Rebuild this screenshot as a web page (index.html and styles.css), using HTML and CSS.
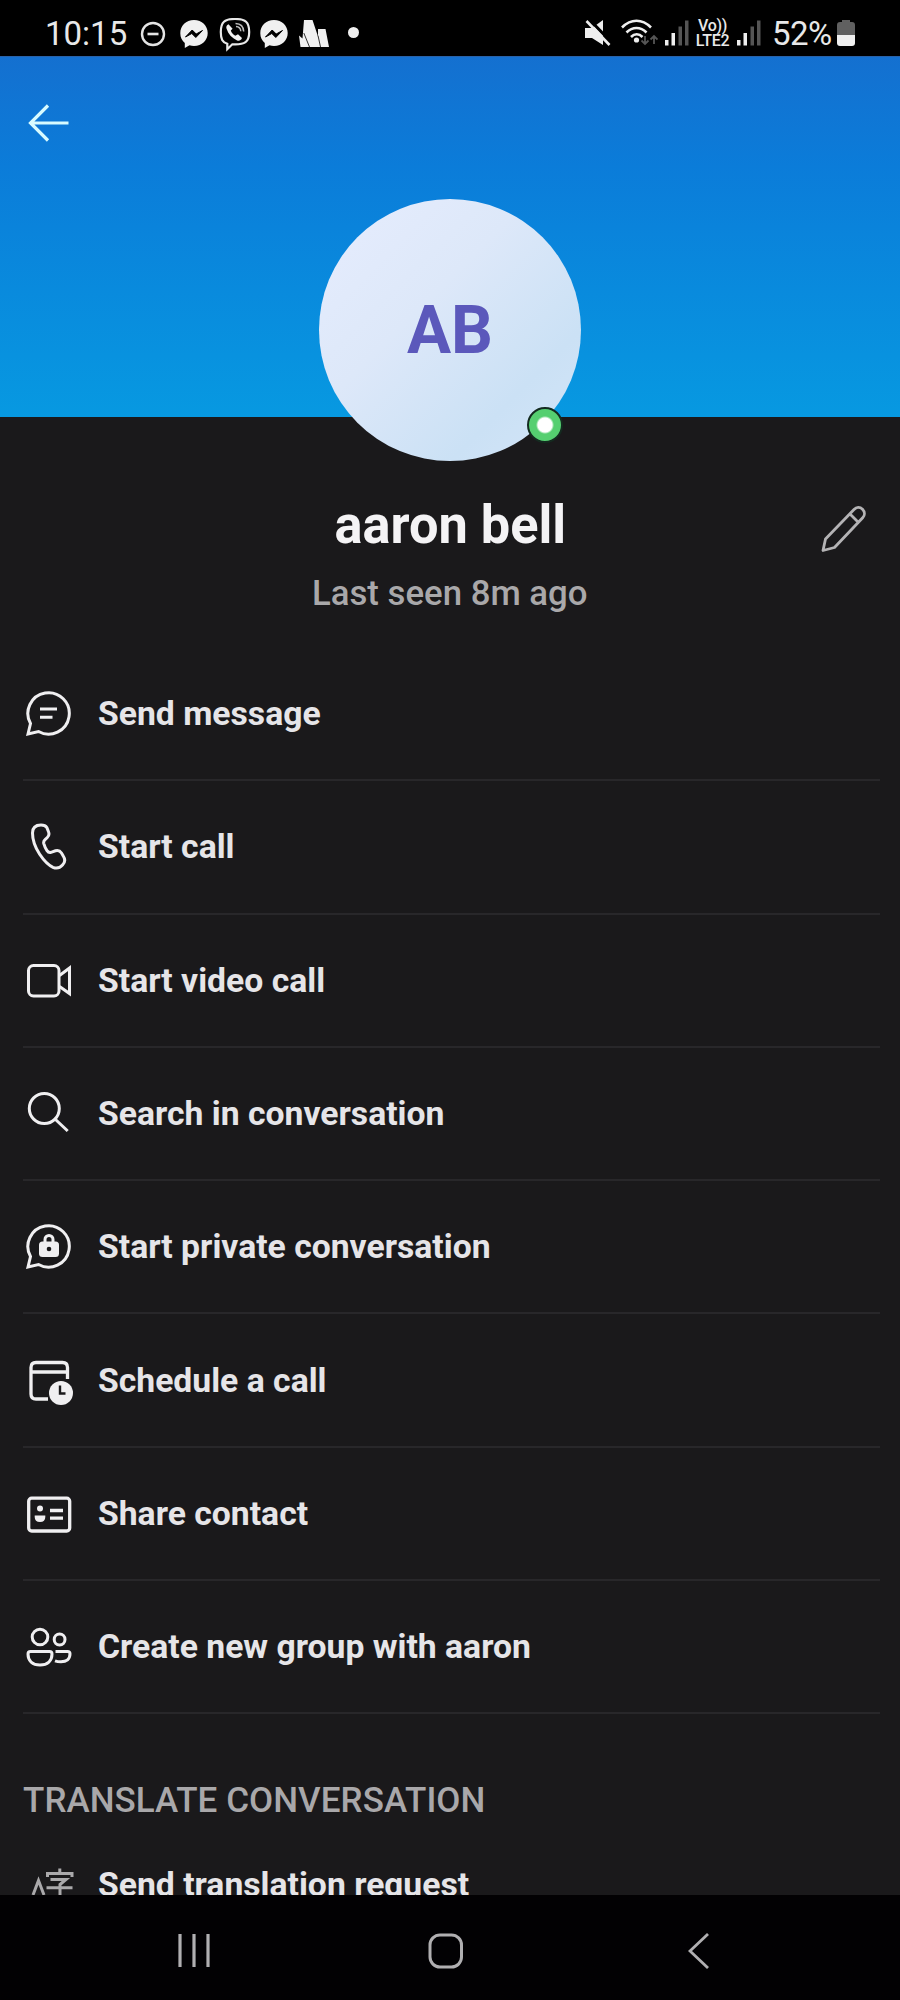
FILE: index.html
```html
<!DOCTYPE html>
<html lang="en">
<head>
<meta charset="utf-8">
<title>aaron bell</title>
<link rel="stylesheet" href="styles.css">
</head>
<body>
<div class="phone">
  <header class="status">
    <div class="status-left">
      <span class="clock">10:15</span>
      <svg class="dnd" width="26" height="32" viewBox="0 0 26 32"><circle cx="13" cy="16" r="11" fill="none" stroke="#e4e4e4" stroke-width="2.4"/><path d="M7.500 16h11" stroke="#e4e4e4" stroke-width="2.600"/></svg>
      <svg class="messenger" width="28" height="32" viewBox="0 0 28 32"><path d="M14 2C6 2 .3 7.800.3 15.200c0 4.100 1.700 7.400 4.500 9.700v5l4.700-2.600c1.400.4 2.900.6 4.500.6 8 0 13.700-5.600 13.700-12.900S22 2 14 2z" fill="#f0f0f0"/><path d="M5.500 19l6.700-7 4 4 6.300-3.500-6.700 7-4-4z" fill="#000" stroke="#000" stroke-width="1" stroke-linejoin="round"/></svg>
      <svg class="viber" width="32" height="34" viewBox="0 0 32 34"><path d="M16 1C5.500 1 1.800 4 1.800 14c0 7 1.500 10.300 6.500 11.800v5.400l5-4.900C26 27 30.200 24 30.200 14 30.200 4 26.500 1 16 1z" fill="none" stroke="#e8e8e8" stroke-width="2.200"/><path d="M9.500 6.300c-1.800.8-2.600 2.400-2 4.300 1.800 5.700 5.300 9.500 10.600 11.900 2 .9 4-.2 4.900-2.500l-4-3.700-2.700 1.500c-2.200-1.200-3.700-2.800-4.500-5.200l1.800-1.900z" fill="#f0f0f0"/><path d="M16.500 5.500c5 .2 8 3 8.200 8M17 8.500c3 .2 4.600 1.900 4.800 4.700" fill="none" stroke="#bbb" stroke-width="1.500"/></svg>
      <svg class="messenger second" width="28" height="32" viewBox="0 0 28 32"><path d="M14 2C6 2 .3 7.800.3 15.200c0 4.100 1.700 7.400 4.500 9.700v5l4.700-2.600c1.400.4 2.900.6 4.500.6 8 0 13.700-5.600 13.700-12.900S22 2 14 2z" fill="#f0f0f0"/><path d="M5.500 19l6.700-7 4 4 6.300-3.500-6.700 7-4-4z" fill="#000" stroke="#000" stroke-width="1" stroke-linejoin="round"/></svg>
      <svg class="peaks" width="31" height="32" viewBox="0 0 31 32"><path d="M0 17.500L3.500 20.500 5 2h8.500L19 18.500V11h7.500L30 29H1.500z" fill="#f0f0f0"/><path d="M4.800 15L10.500 29M19 17.500L21.500 29" stroke="#000" stroke-width=".8"/></svg>
      <span class="more-dot"></span>
    </div>
    <div class="status-right">
      <svg class="mute" width="26" height="30" viewBox="0 0 26 30"><path d="M0 10h7l11-8v25L7 20H0z" fill="#eee"/><path d="M3 0l23 24" stroke="#000" stroke-width="3"/><path d="M1.500 3l23 24" stroke="#eee" stroke-width="2.600"/></svg>
      <svg class="wifi" width="37" height="30" viewBox="0 0 37 30"><g fill="none" stroke="#eee" stroke-width="2.600"><path d="M1 9.500C10 .5 21 .5 30 9.500"/><path d="M5.500 14.500c6-6 14-6 20 0"/><path d="M10 19c3.500-3.500 8-3.500 11.500 0"/></g><circle cx="15.500" cy="22" r="2.600" fill="#eee"/><path d="M24 18v8m-3.500-3.500L24 26l3.500-3.500M33 26v-8m-3.500 3.500L33 18l3.500 3.500" fill="none" stroke="#555" stroke-width="1.800"/></svg>
      <svg class="signal" width="24" height="30" viewBox="0 0 24 30"><path d="M0 22h3.500v5.500H0zM6.500 15H10v12.500H6.500z" fill="#eee"/><path d="M13.500 8.500H17v19h-3.500zM20 2.500h3.500v25H20z" fill="#555"/></svg>
      <span class="lte"><b>Vo))</b><b>LTE2</b></span>
      <svg class="signal" width="24" height="30" viewBox="0 0 24 30"><path d="M0 22h3.500v5.500H0zM6.500 15H10v12.500H6.500z" fill="#eee"/><path d="M13.500 8.500H17v19h-3.500zM20 2.500h3.500v25H20z" fill="#555"/></svg>
      <span class="percent">52%</span>
      <svg class="battery" width="18" height="30" viewBox="0 0 18 30"><path d="M0 17V7q0-3 3-3h2V2h8v2h2q3 0 3 3v10z" fill="#606060"/><path d="M0 17h18v8q0 3-3 3H3q-3 0-3-3z" fill="#f0f0f0"/></svg>
    </div>
  </header>

  <section class="cover">
    <svg class="back" width="44" height="40" viewBox="0 0 44 40"><path d="M40.500 20H2.500M20 2.500L2.500 20 20 37.500" fill="none" stroke="#d8fbff" stroke-width="3.200"/></svg>
    <div class="avatar"><span class="fit initials">AB</span><i class="presence"></i></div>
  </section>

  <section class="identity">
    <h1><span class="fit name">aaron bell</span></h1>
    <p><span class="fit seen">Last seen 8m ago</span></p>
    <svg class="edit" width="48" height="52" viewBox="0 0 48 52"><path d="M3 46.500l2.500-11.500L34 5.500c2.500-2.700 6-2.700 8.500-.2s2.500 6 .2 8.500L14.500 43.500zM30 10l8.500 8.500" fill="none" stroke="#b4b3b5" stroke-width="2.800" stroke-linejoin="round"/></svg>
  </section>

  <ul class="actions">
    <li><svg class="icon" viewBox="0 0 50 50"><path d="M4 46l2.500-10.500A20.700 20.700 0 1 1 14.500 43.500z"/><path d="M16 21h17M16 29.300h12.500"/></svg><span class="fit">Send message</span></li>
    <li><svg class="icon" viewBox="0 0 50 50"><path d="M17 4c-5.500 0-8.500 3-8.500 8 0 7.500 2.500 14 7 21 4 6 8.500 11 13.500 13.300 3.500 1.500 7 .5 9.500-2.300 2.800-3 3.200-5.200 1-8.500l-2-3.500c-1.500-2.200-3.500-3-6-2.200l-4.500 1.500c-2 .5-3-.2-4-1.700-1.500-2.300-2.500-4.500-3.200-7-.4-1.600-.2-2.600 1-3.700l2.500-2.400c1.700-1.600 2.100-3.500 1.200-5.700L22.800 6.500C21.500 4.300 19.500 4 17 4z"/></svg><span class="fit">Start call</span></li>
    <li><svg class="icon" viewBox="0 0 50 50"><rect x="4.500" y="10.500" width="30.500" height="30.500" rx="5"/><path d="M35.500 20.500L45.500 13v25.500L35.500 31.500"/></svg><span class="fit">Start video call</span></li>
    <li><svg class="icon" viewBox="0 0 50 50"><circle cx="20.300" cy="20.500" r="15"/><path d="M31 31l12.700 12"/></svg><span class="fit">Search in conversation</span></li>
    <li><svg class="icon" viewBox="0 0 50 50"><path d="M4 46l2.500-10.500A20.700 20.700 0 1 1 14.500 43.500z"/><path d="M21 21v-2.500a4 4 0 0 1 8 0V21"/><rect class="solid" x="15" y="20.500" width="20" height="15.500" rx="3.500"/><circle class="hole" cx="25" cy="28" r="2.300"/></svg><span class="fit">Start private conversation</span></li>
    <li><svg class="icon bold" viewBox="0 0 50 50"><path d="M24 44H12q-5 0-5-5V12.500q0-5 5-5h26.500q5 0 5 5V24M7 17h36.500"/><circle class="solid" cx="37" cy="38" r="12"/><path class="dark" d="M36 30.500v8h5.500"/></svg><span class="fit">Schedule a call</span></li>
    <li><svg class="icon bold" viewBox="0 0 50 50"><rect x="4.700" y="10.200" width="41" height="32.800" rx="3"/><path d="M26 22.500h13M26 30.200h13"/><circle class="solid" cx="16" cy="20.500" r="3"/><path class="solid" d="M10.700 27.500h10.600v1.500q0 5-5.300 5t-5.300-5z"/></svg><span class="fit">Share contact</span></li>
    <li><svg class="icon" viewBox="0 0 50 50"><circle cx="16" cy="16" r="7.800"/><circle cx="35.600" cy="18.500" r="5.400"/><path d="M6.500 30.500h19q2.500 0 2.500 2.500c0 7-4.500 11-12 11s-12-4-12-11q0-2.500 2.500-2.500zM31.500 30.500h12q2.500 0 2.500 2.300c0 5.200-3.500 8-9 8q-3.500 0-6-1"/></svg><span class="fit">Create new group with aaron</span></li>
  </ul>

  <section class="translate">
    <h2>TRANSLATE CONVERSATION</h2>
    <div class="clipped">
      <svg class="icon dim" viewBox="0 0 50 50"><path d="M9 31L14.500 16.500 20 31M23.500 13V9.500h24.500V13M35.800 4.500v5M26.500 15.500H42L36 20.500V31M22.500 23.800h26"/></svg>
      <span class="fit">Send translation request</span>
    </div>
  </section>

  <nav class="navbar">
    <svg width="34" height="36" viewBox="0 0 34 36"><path d="M3 1v33M17 1v33M31 1v33" stroke="#b0afb1" stroke-width="3.200"/></svg>
    <svg class="home" width="36" height="36" viewBox="0 0 36 36"><rect x="2" y="2" width="31.500" height="32" rx="10" fill="none" stroke="#b0afb1" stroke-width="3"/></svg>
    <svg width="22" height="36" viewBox="0 0 22 36"><path d="M20 1L2 18l18 17" fill="none" stroke="#b0afb1" stroke-width="2.800"/></svg>
  </nav>
</div>
</body>
</html>
```

FILE: styles.css
```css
* { box-sizing: border-box; }
body { margin: 0; background: #000; font-family: Roboto, "Liberation Sans", sans-serif; }
h1, h2, p, ul { margin: 0; padding: 0; font-weight: inherit; }
.phone { width: 900px; height: 2000px; display: flex; flex-direction: column; overflow: hidden; background: #1a191b; }
.fit { display: inline-block; white-space: nowrap; }

.status { flex: none; height: 56px; background: #000; display: flex; justify-content: space-between; padding: 18px 45px 0 45px; color: #e8e8e8; }
.status-left, .status-right { display: flex; align-items: flex-start; height: 32px; }
.clock, .percent { font-size: 33px; line-height: 32px; }
.clock { width: 95px; }
.dnd { margin-right: 14px; }
.messenger { margin-right: 11px; }
.viber { margin-right: 9px; }
.peaks { margin-right: 18px; }
.more-dot { width: 11px; height: 11px; margin-top: 9px; border-radius: 50%; background: #f0f0f0; }
.mute { margin-right: 10px; }
.wifi { margin-right: 7px; }
.signal { margin-right: 6px; }
.lte { width: 35px; margin-right: 7px; display: flex; flex-direction: column; align-items: center; font-size: 16px; line-height: 15px; letter-spacing: -.3px; }
.lte b { font-weight: 500; }
.percent { width: 65px; margin-left: 5px; letter-spacing: -.6px; }

.cover { flex: none; height: 361px; padding: 46px 28px 0; position: relative; background: linear-gradient(#1470d0, #0b7cd9 30%, #0799e1); border-top: 1px solid #2a62a8; }
.back { display: block; }
.avatar { width: 262px; height: 262px; margin: 56px auto 0; border-radius: 50%; background: linear-gradient(135deg, #e3ebfc 15%, #dde8f9 40%, #cbe1f5 75%, #d3e5f8); display: flex; align-items: center; justify-content: center; position: relative; z-index: 1; color: #5b58bb; font-size: 67px; font-weight: 700; line-height: 1; }
.initials { transform: scaleX(.98); }
.presence { position: absolute; left: 208px; top: 208px; width: 36px; height: 36px; border-radius: 50%; border: 2px solid #142b20; background: radial-gradient(circle, #fff 7px, #55cf70 9px); }

.identity { flex: none; height: 231px; position: relative; padding-top: 73px; text-align: center; }
.identity h1 { font-size: 53px; line-height: 70px; font-weight: 700; color: #f4f3f5; }
.name { transform: scaleX(.987); }
.identity p { font-size: 35px; line-height: 40px; margin-top: 14px; color: #a9a8aa; font-weight: 500; }
.seen { transform: scaleX(.993); }
.edit { position: absolute; left: 820px; top: 87px; }

.actions { flex: none; list-style: none; padding: 0 20px 0 23px; }
.actions li { height: 133.300px; display: flex; align-items: center; gap: 24px; padding-bottom: 1px; border-bottom: 2px solid #28272a; color: #e6e5e8; font-size: 34px; font-weight: 700; line-height: 40px; }
.actions .fit, .clipped .fit { transform: scaleX(.991); transform-origin: left; }
.icon { width: 50px; height: 50px; margin-left: .5px; flex: none; fill: none; stroke: #f0eff1; stroke-width: 3; }
.icon.bold { stroke-width: 3.300; }
.icon .solid { fill: #f0eff1; stroke: none; }
.icon .hole { fill: #1a191b; stroke: none; }
.icon .dark { stroke: #1a191b; stroke-width: 2.400; }
.icon.dim { stroke: #aaa9ab; }

.translate { flex: 1; min-height: 0; overflow: hidden; padding: 65px 24px 0 23px; }
.translate h2 { font-size: 35px; line-height: 44px; color: #a9a8aa; font-weight: 500; white-space: nowrap; letter-spacing: .05px; }
.clipped { display: flex; align-items: flex-start; gap: 24px; margin-top: 41px; color: #e6e5e8; font-size: 34px; font-weight: 700; line-height: 40px; }

.navbar { flex: none; height: 105px; padding: 38px 190px 0 177px; background: #020103; display: flex; justify-content: space-between; }
.home { margin-right: 8px; }
```
